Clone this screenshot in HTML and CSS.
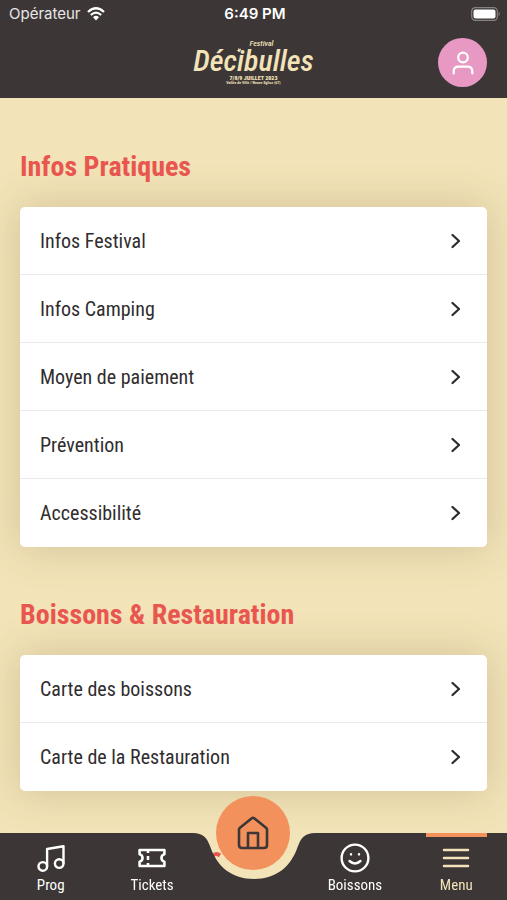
FILE: index.html
```html
<!DOCTYPE html>
<html lang="fr">
<head>
<meta charset="utf-8">
<meta name="viewport" content="width=device-width, initial-scale=1">
<title>Décibulles</title>
<link rel="stylesheet" href="styles.css">
</head>
<body>
<svg class="sprite" aria-hidden="true">
  <symbol id="chevron" viewBox="0 0 12 16"><path d="M2.5 2 L9 8 L2.5 14" fill="none" stroke="currentColor" stroke-width="2.3" stroke-linecap="round" stroke-linejoin="round"/></symbol>
</svg>
<header class="top">
  <div class="status">
    <div class="carrier">
      <span>Opérateur</span>
      <svg class="wifi" viewBox="0 0 18 14" aria-hidden="true">
        <path d="M1 5 Q9 -2.4 17 5" fill="none" stroke="currentColor" stroke-width="2.3"/>
        <path d="M3.8 8 Q9 3.4 14.2 8" fill="none" stroke="currentColor" stroke-width="2.2"/>
        <path d="M6 10.2 Q9 7.4 12 10.2 L9 13.4 Z" fill="currentColor"/>
      </svg>
    </div>
    <time class="clock">6:49 PM</time>
    <svg class="battery" viewBox="0 0 30 14" aria-hidden="true">
      <rect x=".7" y=".7" width="25.6" height="12.6" rx="3.6" fill="none" stroke="#858282" stroke-width="1.2"/>
      <rect x="2.5" y="2.5" width="22" height="9" rx="2" fill="#fff"/>
      <path d="M27.6 4.8 Q30 7 27.6 9.2 Z" fill="#858282"/>
    </svg>
  </div>
  <div class="brandbar">
    <div class="logo">
      <span class="logo-over">Festival</span>
      <span class="logo-name">Décibulles</span>
      <svg class="logo-leaf" viewBox="0 0 8 8" aria-hidden="true"><path d="M4 7 L1 4 L3 4 L3 1 L5 3 L7 2 L6 5 Z" fill="currentColor"/></svg>
      <span class="logo-date">7/8/9 JUILLET 2023</span>
      <span class="logo-place">Vallée de Villé / Neuve Eglise (67)</span>
    </div>
    <button class="profile" type="button" aria-label="Profil">
      <svg viewBox="0 0 24 26" aria-hidden="true" fill="none" stroke="currentColor" stroke-width="2.2" stroke-linecap="round">
        <circle cx="12" cy="7.5" r="4.8"/>
        <path d="M2.7 23.5 V21.5 Q2.7 16.7 7.5 16.7 H16.5 Q21.3 16.7 21.3 21.5 V23.5"/>
      </svg>
    </button>
  </div>
</header>

<main class="content">
  <section>
    <h2>Infos Pratiques</h2>
    <ul class="card">
      <li><a href="#festival">Infos Festival<svg class="chev"><use href="#chevron"/></svg></a></li>
      <li><a href="#camping">Infos Camping<svg class="chev"><use href="#chevron"/></svg></a></li>
      <li><a href="#paiement">Moyen de paiement<svg class="chev"><use href="#chevron"/></svg></a></li>
      <li><a href="#prevention">Prévention<svg class="chev"><use href="#chevron"/></svg></a></li>
      <li><a href="#accessibilite">Accessibilité<svg class="chev"><use href="#chevron"/></svg></a></li>
    </ul>
  </section>
  <section>
    <h2>Boissons &amp; Restauration</h2>
    <ul class="card">
      <li><a href="#boissons">Carte des boissons<svg class="chev"><use href="#chevron"/></svg></a></li>
      <li><a href="#restauration">Carte de la Restauration<svg class="chev"><use href="#chevron"/></svg></a></li>
    </ul>
  </section>
</main>

<nav class="tabs">
  <div class="tabs-bg" aria-hidden="true">
    <span class="fill"></span>
    <svg class="notch" viewBox="0 0 134 67">
      <path d="M25 24 Q28 19 33 22.5" fill="none" stroke="#e8564f" stroke-width="4"/>
      <path d="M0 0 H6 C16 0 20 5 23 13 C30 34 45 46 67 46 C89 46 104 34 111 13 C114 5 118 0 128 0 H134 V67 H0 Z" fill="#3c3636"/>
    </svg>
    <span class="fill"></span>
  </div>
  <a class="tab" href="#prog">
    <svg viewBox="0 0 30 30" aria-hidden="true" fill="none" stroke="currentColor" stroke-width="2.4" stroke-linejoin="round">
      <circle cx="6.8" cy="23.4" r="4.3"/><circle cx="23.2" cy="20.6" r="4.3"/>
      <path d="M11.1 23.4 V6 L27.5 3.2 V20.6"/>
    </svg>
    <span>Prog</span>
  </a>
  <a class="tab" href="#tickets">
    <svg viewBox="0 0 30 30" aria-hidden="true" fill="none" stroke="currentColor" stroke-width="2.6" stroke-linejoin="round">
      <path d="M2.6 7 H27.4 V11.3 A3.8 3.8 0 0 0 27.4 18.7 V23 H2.6 V18.7 A3.8 3.8 0 0 0 2.6 11.3 Z"/>
      <path d="M11 7 V10 M11 13 V17 M11 20 V23"/>
    </svg>
    <span>Tickets</span>
  </a>
  <div class="home-slot">
    <a class="home" href="#accueil" aria-label="Accueil">
      <svg viewBox="0 0 36 36" aria-hidden="true" fill="none" stroke="currentColor" stroke-width="2.6" stroke-linejoin="round">
        <path d="M4 14.5 Q4 13.5 5 12.7 L16.8 3.3 Q18 2.4 19.2 3.3 L31 12.7 Q32 13.5 32 14.5 V30 Q32 33 29 33 H7 Q4 33 4 30 Z"/>
        <path d="M13 33 V18 H23 V33"/>
      </svg>
    </a>
  </div>
  <a class="tab" href="#boissons-tab">
    <svg viewBox="0 0 30 30" aria-hidden="true" fill="none" stroke="currentColor" stroke-width="2.4" stroke-linecap="round">
      <circle cx="15" cy="15" r="13.4"/>
      <path d="M9.5 18 Q15 23 20.5 18"/>
      <path d="M11 11.3 V11.4 M19 11.3 V11.4"/>
    </svg>
    <span>Boissons</span>
  </a>
  <a class="tab active" href="#menu" aria-current="page">
    <svg viewBox="0 0 30 30" aria-hidden="true" fill="none" stroke="currentColor" stroke-width="2.5" stroke-linecap="round">
      <path d="M3 7 H27 M3 15 H27 M3 23 H27"/>
    </svg>
    <span>Menu</span>
  </a>
</nav>
</body>
</html>
```
FILE: styles.css
```css
* { box-sizing: border-box; }

body {
  margin: 0;
  min-height: 100vh;
  background: #f2e3b8;
  color: #302d2e;
  font-family: "Roboto Condensed", "Liberation Sans Narrow", "Liberation Sans", sans-serif;
}

a { color: inherit; text-decoration: none; }
.sprite { display: none; }

.top { background: #3c3636; color: #fff; height: 98px; }

.status {
  display: grid;
  grid-template-columns: 1fr auto 1fr;
  align-items: center;
  height: 27px;
  padding: 0 6px 0 9px;
  font-family: Inter, "Liberation Sans", sans-serif;
  font-size: 14px;
}
.carrier { display: flex; align-items: center; gap: 6px; color: #e8e6e6; font-size: 15px; }
.wifi { width: 18px; height: 14px; color: #fff; }
.clock { font-weight: 600; font-size: 15px; }
.battery { width: 30px; height: 14px; justify-self: end; }

.brandbar {
  display: grid;
  grid-template-columns: 1fr auto 1fr;
  align-items: center;
  padding: 11px 20px 0 20px;
}
.logo {
  grid-column: 2;
  position: relative;
  display: flex;
  flex-direction: column;
  align-items: center;
  color: #f2e3b8;
}
.logo-over { padding-left: 16px; font-size: 8px; line-height: 8px; font-style: italic; font-weight: 500; }
.logo-name { font-size: 30px; line-height: 26px; font-style: italic; font-weight: 500; }
.logo-leaf { position: absolute; top: 7px; left: 43px; width: 6px; height: 6px; }
.logo-date { font-size: 6px; line-height: 7px; font-weight: 900; }
.logo-place { font-size: 4px; line-height: 4px; font-weight: 700; }

.profile {
  justify-self: end;
  display: grid;
  place-items: center;
  width: 49px;
  height: 49px;
  padding: 0;
  border: 0;
  border-radius: 50%;
  background: #e799c3;
  color: #fff;
}
.profile svg { width: 24px; height: 26px; }

.content { padding: 49px 20px 108px; }
section + section { margin-top: 48px; }

h2 {
  margin: 0 0 20px;
  color: #e8564f;
  font-size: 28px;
  line-height: 40px;
  font-weight: 700;
}

.card {
  margin: 0;
  padding: 0;
  list-style: none;
  background: #fff;
  border-radius: 5px;
  box-shadow: 0 0 40px rgba(120, 90, 50, .25);
}
.card a {
  display: flex;
  align-items: center;
  justify-content: space-between;
  height: 68px;
  padding: 0 25px 0 20px;
  font-size: 20px;
  border-bottom: 1px solid #e9e9ea;
}
.card li:last-child a { border-bottom-color: transparent; }
.chev { width: 12px; height: 16px; }

.tabs {
  position: fixed;
  inset: auto 0 0;
  display: grid;
  grid-template-columns: repeat(5, 1fr);
  height: 67px;
  color: #fff;
}
.tabs-bg { position: absolute; inset: 0; display: flex; }
.fill { flex: 1; background: #3c3636; }
.notch { flex: none; width: 134px; height: 67px; margin: 0 -1px; }

.tab {
  position: relative;
  display: flex;
  flex-direction: column;
  align-items: center;
  padding-top: 10px;
  font-size: 15px;
  line-height: 24px;
}
.tab svg { width: 30px; height: 30px; }
.tab.active { color: #f2e3b8; }
.tab.active::before {
  content: "";
  position: absolute;
  top: 0;
  left: 20%;
  right: 20%;
  height: 4px;
  background: #f3915c;
}

.home-slot { position: relative; display: flex; justify-content: center; align-items: flex-start; }
.home {
  display: grid;
  place-items: center;
  flex: none;
  width: 74px;
  height: 74px;
  margin-top: -37px;
  border-radius: 50%;
  background: #f3915c;
  color: #3c3636;
}
.home svg { width: 36px; height: 36px; }
```
